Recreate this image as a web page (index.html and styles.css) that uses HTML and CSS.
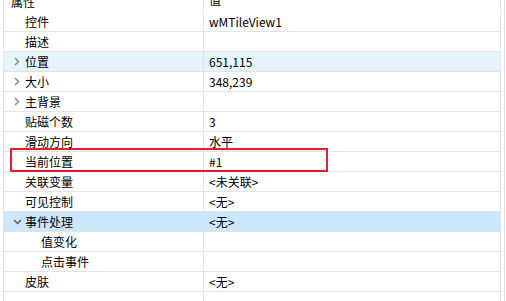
FILE: index.html
```html
<!DOCTYPE html>
<html lang="zh-CN">

<head>
    <meta charset="UTF-8">
    <link rel="stylesheet" href="styles.css">
    <title>属性</title>
</head>

<body>
    <div class="sheet">
        <div class="row head">
            <div class="name">属性</div>
            <div class="value">值</div>
        </div>
        <div class="row">
            <div class="name">控件</div>
            <div class="value">wMTileView1</div>
        </div>
        <div class="row">
            <div class="name">描述</div>
            <div class="value"></div>
        </div>
        <div class="row hover">
            <div class="name"><span class="arrow">
                <svg width="8" height="9" viewBox="0 0 8 9"><path d="M2 1 L5.5 4.5 L2 8" fill="none" stroke="#8a8a8a" stroke-width="1.5"/></svg>
            </span>位置</div>
            <div class="value">651,115</div>
        </div>
        <div class="row">
            <div class="name"><span class="arrow">
                <svg width="8" height="9" viewBox="0 0 8 9"><path d="M2 1 L5.5 4.5 L2 8" fill="none" stroke="#8a8a8a" stroke-width="1.5"/></svg>
            </span>大小</div>
            <div class="value">348,239</div>
        </div>
        <div class="row">
            <div class="name"><span class="arrow">
                <svg width="8" height="9" viewBox="0 0 8 9"><path d="M2 1 L5.5 4.5 L2 8" fill="none" stroke="#8a8a8a" stroke-width="1.5"/></svg>
            </span>主背景</div>
            <div class="value"></div>
        </div>
        <div class="row">
            <div class="name">贴磁个数</div>
            <div class="value">3</div>
        </div>
        <div class="row">
            <div class="name">滑动方向</div>
            <div class="value">水平</div>
        </div>
        <div class="row">
            <div class="name">当前位置</div>
            <div class="value">#1</div>
            <div class="mark"></div>
        </div>
        <div class="row">
            <div class="name">关联变量</div>
            <div class="value">&lt;未关联&gt;</div>
        </div>
        <div class="row">
            <div class="name">可见控制</div>
            <div class="value">&lt;无&gt;</div>
        </div>
        <div class="row selected">
            <div class="name"><span class="arrow">
                <svg width="9" height="8" viewBox="0 0 9 8"><path d="M1 2 L4.5 5.5 L8 2" fill="none" stroke="#555" stroke-width="1.5"/></svg>
            </span>事件处理</div>
            <div class="value">&lt;无&gt;</div>
        </div>
        <div class="row">
            <div class="name child">值变化</div>
            <div class="value"></div>
        </div>
        <div class="row">
            <div class="name child">点击事件</div>
            <div class="value"></div>
        </div>
        <div class="row">
            <div class="name">皮肤</div>
            <div class="value">&lt;无&gt;</div>
        </div>
        <div class="row filler">
            <div class="name"></div>
            <div class="value"></div>
        </div>
    </div>
</body>

</html>
```

FILE: styles.css
```css
body {
    margin: 0;
    font-family: "Noto Sans CJK SC", "Noto Sans", sans-serif;
    font-size: 12px;
    color: #000;
    background: #fff;
    overflow: hidden;
}

.sheet {
    margin: -9px 0 0 3px;
    width: 502px;
    box-sizing: border-box;
    border-left: 1px solid #e3e3e3;
    border-right: 1px solid #dcdcdc;
}

.row {
    position: relative;
    display: flex;
    height: 20px;
    box-sizing: border-box;
    border-bottom: 1px solid #e3e3e3;
    margin-right: 3px;
}

.row.head {
    height: 21px;
    border-bottom: 1px solid #fff;
}

.head .name,
.head .value {
    line-height: 17px;
}

.row.filler {
    height: 12px;
    border-bottom: none;
}

.row.hover {
    background-color: #e5f3fb;
}

.row.selected {
    background-color: #cce8ff;
}

.name {
    width: 200px;
    box-sizing: border-box;
    padding-left: 21px;
    border-right: 1px solid #e3e3e3;
    display: flex;
    align-items: center;
    line-height: 19px;
}

.head .name {
    padding-left: 7px;
}

.name.child {
    padding-left: 37px;
}

.value {
    flex: 1;
    padding-left: 5px;
    border-right: 1px solid #e3e3e3;
    line-height: 19px;
    white-space: nowrap;
}

.arrow {
    width: 16px;
    margin-left: -16px;
    display: flex;
    align-items: center;
    justify-content: center;
}

.arrow svg {
    display: block;
}

.mark {
    position: absolute;
    left: 6px;
    top: -4px;
    width: 318px;
    height: 24px;
    box-sizing: border-box;
    border: 2px solid #e5202a;
}
```
